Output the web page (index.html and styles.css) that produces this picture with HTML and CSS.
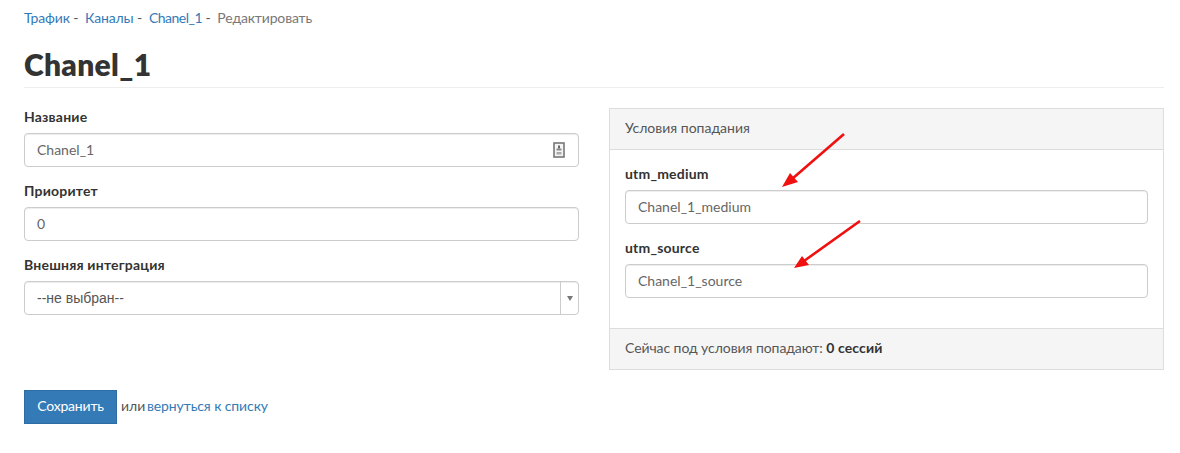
FILE: index.html
```html
<!DOCTYPE html>
<html lang="ru">
<head>
<meta charset="utf-8">
<title>Chanel_1</title>
<link rel="stylesheet" href="styles.css">
</head>
<body>
<div class="page">
  <nav class="crumbs">
    <a href="#">Трафик</a><span class="sep">-</span>
    <a href="#">Каналы</a><span class="sep">-</span>
    <a href="#" class="tight">Chanel_1</a><span class="sep">-</span>
    <span class="current">Редактировать</span>
  </nav>
  <h1 class="title">Chanel_1</h1>
  <div class="columns">
    <form class="form">
      <div class="field">
        <label class="label">Название</label>
        <div class="input">
          <span>Chanel_1</span>
          <svg class="contact" width="12" height="16" viewBox="0 0 12 16">
            <rect x="1" y="1" width="10" height="14" fill="#f4f4f4" stroke="#777" stroke-width="1.6"/>
            <rect x="5" y="3.5" width="2" height="3" fill="#666"/>
            <rect x="3.5" y="6.5" width="5" height="2" fill="#888"/>
            <rect x="3.5" y="10" width="5" height="2.5" fill="#aaa"/>
          </svg>
        </div>
      </div>
      <div class="field">
        <label class="label">Приоритет</label>
        <div class="input"><span>0</span></div>
      </div>
      <div class="field">
        <label class="label">Внешняя интеграция</label>
        <div class="select">
          <span class="select-text">--не выбран--</span>
          <span class="select-arrow"><i class="caret"></i></span>
        </div>
      </div>
    </form>
    <section class="panel">
      <div class="panel-head">Условия попадания</div>
      <div class="panel-body">
        <div class="field">
          <label class="label">utm_medium</label>
          <div class="input"><span>Chanel_1_medium</span></div>
        </div>
        <div class="field">
          <label class="label">utm_source</label>
          <div class="input"><span>Chanel_1_source</span></div>
        </div>
      </div>
      <div class="panel-foot">Сейчас под условия попадают: <b>0 сессий</b></div>
      <svg class="arrow arrow-one" width="66" height="56" viewBox="0 0 66 56">
        <line x1="62" y1="1" x2="10" y2="46" stroke="#f01010" stroke-width="2.6"/>
        <polygon points="0,54 8,40 16,49" fill="#f01010"/>
      </svg>
      <svg class="arrow arrow-two" width="68" height="50" viewBox="0 0 68 50">
        <line x1="66" y1="1" x2="10" y2="41" stroke="#f01010" stroke-width="2.6"/>
        <polygon points="0,48 8,36 15,45" fill="#f01010"/>
      </svg>
    </section>
  </div>
  <div class="actions">
    <button class="save" type="button">Сохранить</button>
    <span class="or">или <a href="#">вернуться к списку</a></span>
  </div>
</div>
</body>
</html>
```
FILE: styles.css
```css
* { box-sizing: border-box; }
html, body { margin: 0; background: #fff; }
body {
  font-family: Lato, "Open Sans", "Liberation Sans", sans-serif;
  font-size: 14px;
  line-height: 20px;
  color: #333;
}
a { color: #337ab7; text-decoration: none; }
.page { width: 1180px; height: 453px; padding: 8px 16px 0 24px; overflow: hidden; }
.crumbs { height: 20px; color: #555; }
.crumbs a { letter-spacing: -.15px; }
.crumbs a.tight { letter-spacing: -.5px; }
.sep { margin: 0 3px 0 3.5px; }
.current { color: #777; letter-spacing: -.15px; }
.title {
  margin: 18px 0 20px;
  padding-bottom: 5px;
  height: 42px;
  border-bottom: 1px solid #eee;
  font-size: 30px;
  line-height: 36px;
  font-weight: 800;
  letter-spacing: .3px;
  color: #333;
}
.columns { display: grid; grid-template-columns: 555px 555px; column-gap: 30px; align-items: start; }
.field { margin-bottom: 15px; }
.label { display: block; margin-bottom: 5px; font-weight: 700; height: 20px; line-height: 18px; letter-spacing: .2px; }
.input, .select {
  display: flex;
  align-items: center;
  height: 34px;
  border: 1px solid #ccc;
  border-radius: 4px;
  background: #fff;
  box-shadow: inset 0 1px 1px rgba(0,0,0,.075);
  color: #666;
}
.input { justify-content: space-between; padding: 0 13px 0 12px; }
.contact { display: block; }
.select { font-family: "Liberation Sans", Arial, sans-serif; color: #555; }
.select-text { flex: 1; padding-left: 12px; }
.select-arrow {
  width: 18px;
  align-self: stretch;
  border-left: 1px solid #ccc;
  display: flex;
  align-items: center;
  justify-content: center;
}
.caret {
  width: 0;
  height: 0;
  border-left: 3px solid transparent;
  border-right: 3px solid transparent;
  border-top: 5px solid #777;
}
.panel { position: relative; height: 262px; border: 1px solid #ddd; display: flex; flex-direction: column; color: #555; }
.panel .label { color: #333; }
.panel-head {
  height: 41px;
  padding: 9px 15px;
  background: #f5f5f5;
  border-bottom: 1px solid #ddd;
}
.panel-body { flex: 1; padding: 15px 15px 0; }
.panel-foot {
  height: 41px;
  padding: 9px 15px;
  background: #f5f5f5;
  border-top: 1px solid #ddd;
  letter-spacing: -.07px;
}
.panel-foot b { color: #333; letter-spacing: .1px; }
.arrow { position: absolute; display: block; }
.arrow-one { left: 172px; top: 24px; }
.arrow-two { left: 184px; top: 111px; }
.actions { display: flex; align-items: center; margin-top: 20px; }
.save {
  width: 93px;
  height: 34px;
  padding: 0 0 2px;
  background: #337ab7;
  border: 1px solid #2e6da4;
  color: #fff;
  font: inherit;
  letter-spacing: -.2px;
}
.or { margin-left: 4px; padding-bottom: 2px; color: #555; }
.or a { margin-left: -2px; letter-spacing: -.1px; }
```
